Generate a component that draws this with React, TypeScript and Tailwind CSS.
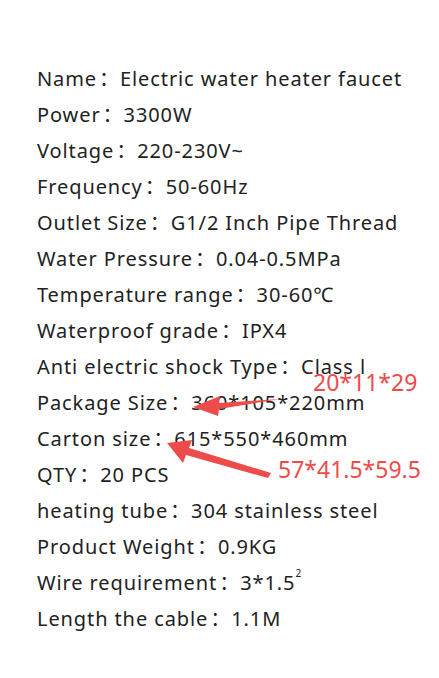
import React from "react";

const rows: [string, React.ReactNode][] = [
  ["Name", "Electric water heater faucet"],
  ["Power", "3300W"],
  ["Voltage", "220-230V~"],
  ["Frequency", "50-60Hz"],
  ["Outlet Size", "G1/2 Inch Pipe Thread"],
  ["Water Pressure", "0.04-0.5MPa"],
  ["Temperature range", "30-60℃"],
  ["Waterproof grade", "IPX4"],
  ["Anti electric shock Type", "Class l"],
  ["Package Size", "360*105*220mm"],
  ["Carton size", "615*550*460mm"],
  ["QTY", "20 PCS"],
  ["heating tube", "304 stainless steel"],
  ["Product Weight", "0.9KG"],
  [
    "Wire requirement",
    <>
      3*1.5<sup className="text-[10px] align-super">2</sup>
    </>,
  ],
  ["Length the cable", "1.1M"],
];

export default function App() {
  return (
    <div className="relative w-[439px] h-[678px] bg-white overflow-hidden">
      <div
        className="flex flex-col pt-[61px] pl-[37px] text-[20px] tracking-[0.9px] leading-[36px] text-[#222222]"
        style={{ fontFamily: '"Noto Sans", "Noto Sans CJK SC", sans-serif' }}
      >
        {rows.map(([k, v], i) => (
          <div key={i} className="whitespace-pre">
            {k}
            <span className="inline-block w-[23px] pl-[2px]">：</span>
            {v}
          </div>
        ))}
      </div>
      <svg
        className="absolute left-0 top-0"
        width="439"
        height="678"
        viewBox="0 0 439 678"
      >
        <path
          d="M280 399 L219 403 L220 396 L193 407 L218 416 L219 409 Z"
          fill="#ee4b4b"
        />
        <path
          d="M271 473 L189 448 L192 440 L167 443 L183 463 L186 455 L268 478 Z"
          fill="#ee4b4b"
        />
      </svg>
      <div
        className="absolute left-[313px] top-[371px] text-[23px] leading-none text-[#ee4b4b]"
        style={{ fontFamily: '"Noto Sans", sans-serif' }}
      >
        20*11*29
      </div>
      <div
        className="absolute left-[278px] top-[458px] text-[23px] leading-none text-[#ee4b4b]"
        style={{ fontFamily: '"Noto Sans", sans-serif' }}
      >
        57*41.5*59.5
      </div>
    </div>
  );
}
